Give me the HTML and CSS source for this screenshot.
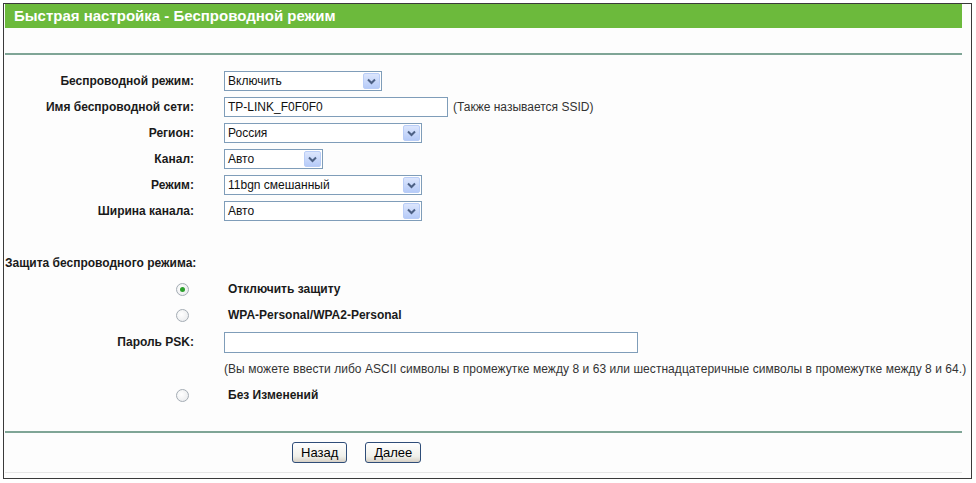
FILE: index.html
```html
<!DOCTYPE html>
<html lang="ru">
<head>
  <meta charset="UTF-8" />
  <title>Быстрая настройка - Беспроводной режим</title>
  <link rel="stylesheet" href="styles.css">
</head>
<body>
  <div class="frame">
    <div class="title">Быстрая настройка - Беспроводной режим</div>
    <div class="divider top"></div>

    <div class="form">
      <div class="row">
        <div class="lbl">Беспроводной режим:</div>
        <div class="ctl">
          <span class="select w158"><span class="val">Включить</span><span class="arrow"><svg width="9" height="7" viewBox="0 0 9 7"><path d="M1 1.5 L4.5 5 L8 1.5" fill="none" stroke="#4d6185" stroke-width="2"/></svg></span></span>
        </div>
      </div>
      <div class="row">
        <div class="lbl">Имя беспроводной сети:</div>
        <div class="ctl">
          <span class="text w224">TP-LINK_F0F0F0</span>
          <span class="note">(Также называется SSID)</span>
        </div>
      </div>
      <div class="row">
        <div class="lbl">Регион:</div>
        <div class="ctl">
          <span class="select w198"><span class="val">Россия</span><span class="arrow"><svg width="9" height="7" viewBox="0 0 9 7"><path d="M1 1.5 L4.5 5 L8 1.5" fill="none" stroke="#4d6185" stroke-width="2"/></svg></span></span>
        </div>
      </div>
      <div class="row">
        <div class="lbl">Канал:</div>
        <div class="ctl">
          <span class="select w99"><span class="val">Авто</span><span class="arrow"><svg width="9" height="7" viewBox="0 0 9 7"><path d="M1 1.5 L4.5 5 L8 1.5" fill="none" stroke="#4d6185" stroke-width="2"/></svg></span></span>
        </div>
      </div>
      <div class="row">
        <div class="lbl">Режим:</div>
        <div class="ctl">
          <span class="select w198"><span class="val">11bgn смешанный</span><span class="arrow"><svg width="9" height="7" viewBox="0 0 9 7"><path d="M1 1.5 L4.5 5 L8 1.5" fill="none" stroke="#4d6185" stroke-width="2"/></svg></span></span>
        </div>
      </div>
      <div class="row">
        <div class="lbl">Ширина канала:</div>
        <div class="ctl">
          <span class="select w198"><span class="val">Авто</span><span class="arrow"><svg width="9" height="7" viewBox="0 0 9 7"><path d="M1 1.5 L4.5 5 L8 1.5" fill="none" stroke="#4d6185" stroke-width="2"/></svg></span></span>
        </div>
      </div>
    </div>

    <div class="section">Защита беспроводного режима:</div>

    <div class="form">
      <div class="row">
        <div class="lbl"><span class="radio checked"></span></div>
        <div class="ctl opt">Отключить защиту</div>
      </div>
      <div class="row">
        <div class="lbl"><span class="radio"></span></div>
        <div class="ctl opt">WPA-Personal/WPA2-Personal</div>
      </div>
      <div class="row psk">
        <div class="lbl">Пароль PSK:</div>
        <div class="ctl"><span class="text w414"></span></div>
      </div>
      <div class="row">
        <div class="lbl"></div>
        <div class="ctl hint">(Вы можете ввести либо ASCII символы в промежутке между 8 и 63 или шестнадцатеричные символы в промежутке между 8 и 64.)</div>
      </div>
      <div class="row">
        <div class="lbl"><span class="radio"></span></div>
        <div class="ctl opt">Без Изменений</div>
      </div>
    </div>

    <div class="divider bottom"></div>

    <div class="buttons">
      <button class="btn">Назад</button>
      <button class="btn">Далее</button>
    </div>
    <div class="foot"></div>
  </div>
</body>
</html>
```

FILE: styles.css
```css
body {
  margin: 0;
  background: #fff;
  font-family: "Liberation Sans", Arial, sans-serif;
  font-size: 12px;
  color: #000;
}

.frame {
  box-sizing: border-box;
  width: 969px;
  height: 476px;
  margin: 3px 0 0 3px;
  padding: 0 9px 0 1px;
  border: 1px solid #3a3a3a;
  background: #fdfdfd;
}

.title {
  height: 24px;
  line-height: 23px;
  background: #6cba3c;
  color: #fff;
  font-size: 15px;
  font-weight: 700;
  padding-left: 9px;
}

.divider {
  height: 2px;
  background: #7fa596;
}
.divider.top {
  margin-top: 25px;
  margin-bottom: 13px;
}
.divider.bottom {
  margin-top: 23px;
}

/* Form rows */
.row {
  display: grid;
  grid-template-columns: 189px 1fr;
  column-gap: 30px;
  height: 26px;
  align-items: center;
}
.row.psk {
  height: 28px;
}

.lbl {
  text-align: right;
  font-size: 12px;
  font-weight: 700;
  color: #1a1a1a;
  display: flex;
  justify-content: flex-end;
  align-items: center;
}

.ctl {
  display: flex;
  align-items: center;
  gap: 5px;
}
.ctl.opt {
  padding-left: 4px;
  font-size: 12px;
  font-weight: 700;
  color: #1a1a1a;
}
.ctl.hint {
  color: #333;
  white-space: nowrap;
  letter-spacing: 0.05px;
}

.note {
  color: #333;
}

.section {
  margin-top: 26px;
  height: 26px;
  line-height: 26px;
  font-size: 12px;
  font-weight: 700;
  color: #1a1a1a;
}

/* Fake controls */
.select,
.text {
  box-sizing: border-box;
  display: flex;
  align-items: center;
  justify-content: space-between;
  height: 20px;
  border: 1px solid #7f9db9;
  background: #fff;
  color: #111;
}
.select .val,
.text {
  padding-left: 3px;
}
.select .arrow {
  box-sizing: border-box;
  width: 17px;
  height: 16px;
  margin-right: 1px;
  display: flex;
  align-items: center;
  justify-content: center;
  border: 1px solid #b9cdf7;
  border-radius: 2px;
  background: linear-gradient(#dce6fd, #b6cbf8);
}

.w99 { width: 99px; }
.w158 { width: 158px; }
.w198 { width: 198px; }
.w224 { width: 224px; }
.w414 { width: 414px; height: 21px; }

.radio {
  box-sizing: border-box;
  width: 13px;
  height: 13px;
  margin-right: 5px;
  border-radius: 50%;
  border: 1px solid #a4acb4;
  background: radial-gradient(circle at 40% 40%, #fff, #e6e8ea);
  display: flex;
  align-items: center;
  justify-content: center;
}
.radio.checked::after {
  content: "";
  width: 5px;
  height: 5px;
  border-radius: 50%;
  background: #2ca02c;
}

/* Buttons */
.buttons {
  display: flex;
  gap: 18px;
  padding: 9px 0 0 287px;
}
.btn {
  height: 21px;
  padding: 0 8px;
  font-family: "Liberation Sans", Arial, sans-serif;
  font-size: 13px;
  color: #000;
  border: 1px solid #2f4d78;
  border-radius: 3px;
  background: linear-gradient(#ffffff, #f0f0ea 70%, #d6d0c5);
}

.foot {
  margin-top: 9px;
  height: 1px;
  background: #e6e6e6;
}
```
